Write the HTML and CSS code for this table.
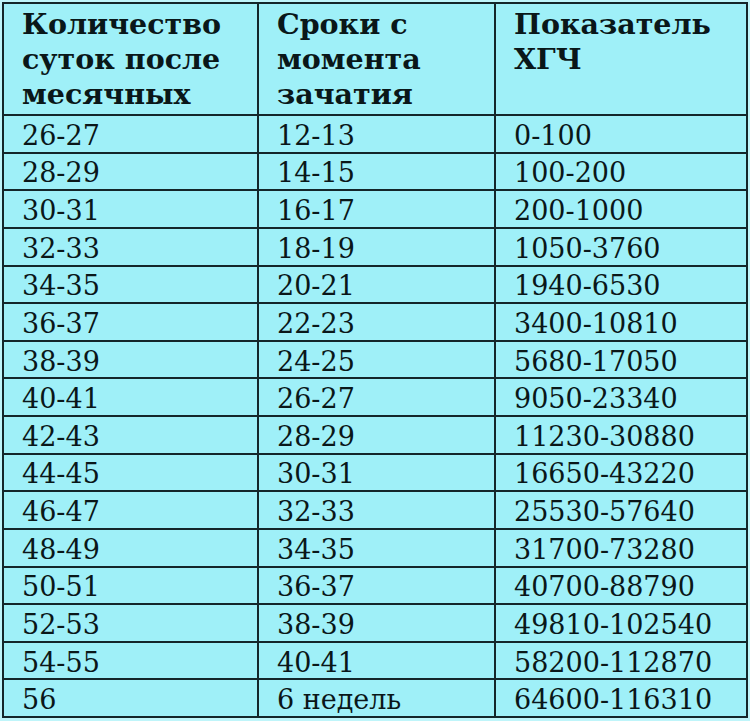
FILE: index.html
```html
<!DOCTYPE html>
<html lang="ru">
<head>
<meta charset="utf-8">
<link rel="stylesheet" href="styles.css">
</head>
<body>
<div class="table">
  <div class="cell head">Количество суток после месячных</div>
  <div class="cell head">Сроки с момента зачатия</div>
  <div class="cell head">Показатель ХГЧ</div>

  <div class="cell">26-27</div><div class="cell">12-13</div><div class="cell">0-100</div>
  <div class="cell">28-29</div><div class="cell">14-15</div><div class="cell">100-200</div>
  <div class="cell">30-31</div><div class="cell">16-17</div><div class="cell">200-1000</div>
  <div class="cell">32-33</div><div class="cell">18-19</div><div class="cell">1050-3760</div>
  <div class="cell">34-35</div><div class="cell">20-21</div><div class="cell">1940-6530</div>
  <div class="cell">36-37</div><div class="cell">22-23</div><div class="cell">3400-10810</div>
  <div class="cell">38-39</div><div class="cell">24-25</div><div class="cell">5680-17050</div>
  <div class="cell">40-41</div><div class="cell">26-27</div><div class="cell">9050-23340</div>
  <div class="cell">42-43</div><div class="cell">28-29</div><div class="cell">11230-30880</div>
  <div class="cell">44-45</div><div class="cell">30-31</div><div class="cell">16650-43220</div>
  <div class="cell">46-47</div><div class="cell">32-33</div><div class="cell">25530-57640</div>
  <div class="cell">48-49</div><div class="cell">34-35</div><div class="cell">31700-73280</div>
  <div class="cell">50-51</div><div class="cell">36-37</div><div class="cell">40700-88790</div>
  <div class="cell">52-53</div><div class="cell">38-39</div><div class="cell">49810-102540</div>
  <div class="cell">54-55</div><div class="cell">40-41</div><div class="cell">58200-112870</div>
  <div class="cell">56</div><div class="cell">6 недель</div><div class="cell">64600-116310</div>
</div>
</body>
</html>
```

FILE: styles.css
```css
html, body {
  margin: 0;
  padding: 0;
  background: #bff5fa;
}

body {
  padding: 2px 2px 0 2px;
  height: 721px;
  box-sizing: border-box;
}

.table {
  display: grid;
  grid-template-columns: 253px 235px 250px;
  grid-template-rows: 110px repeat(16, minmax(0, 1fr));
  gap: 2px;
  padding: 2px;
  width: 746px;
  height: 716px;
  box-sizing: border-box;
  background: #14262a;
  font-family: "DejaVu Serif", "Liberation Serif", serif;
  color: #0a1719;
}

.cell {
  background: #9ff0f8;
  padding: 4px 0 0 18px;
  font-size: 27px;
  line-height: 28px;
  font-variant-numeric: oldstyle-nums;
  display: flex;
  align-items: center;
  white-space: nowrap;
  min-height: 0;
  overflow: hidden;
}

.head {
  display: block;
  white-space: normal;
  font-weight: bold;
  font-size: 28.5px;
  line-height: 35px;
  padding: 3px 4px 0 18px;
}
```
